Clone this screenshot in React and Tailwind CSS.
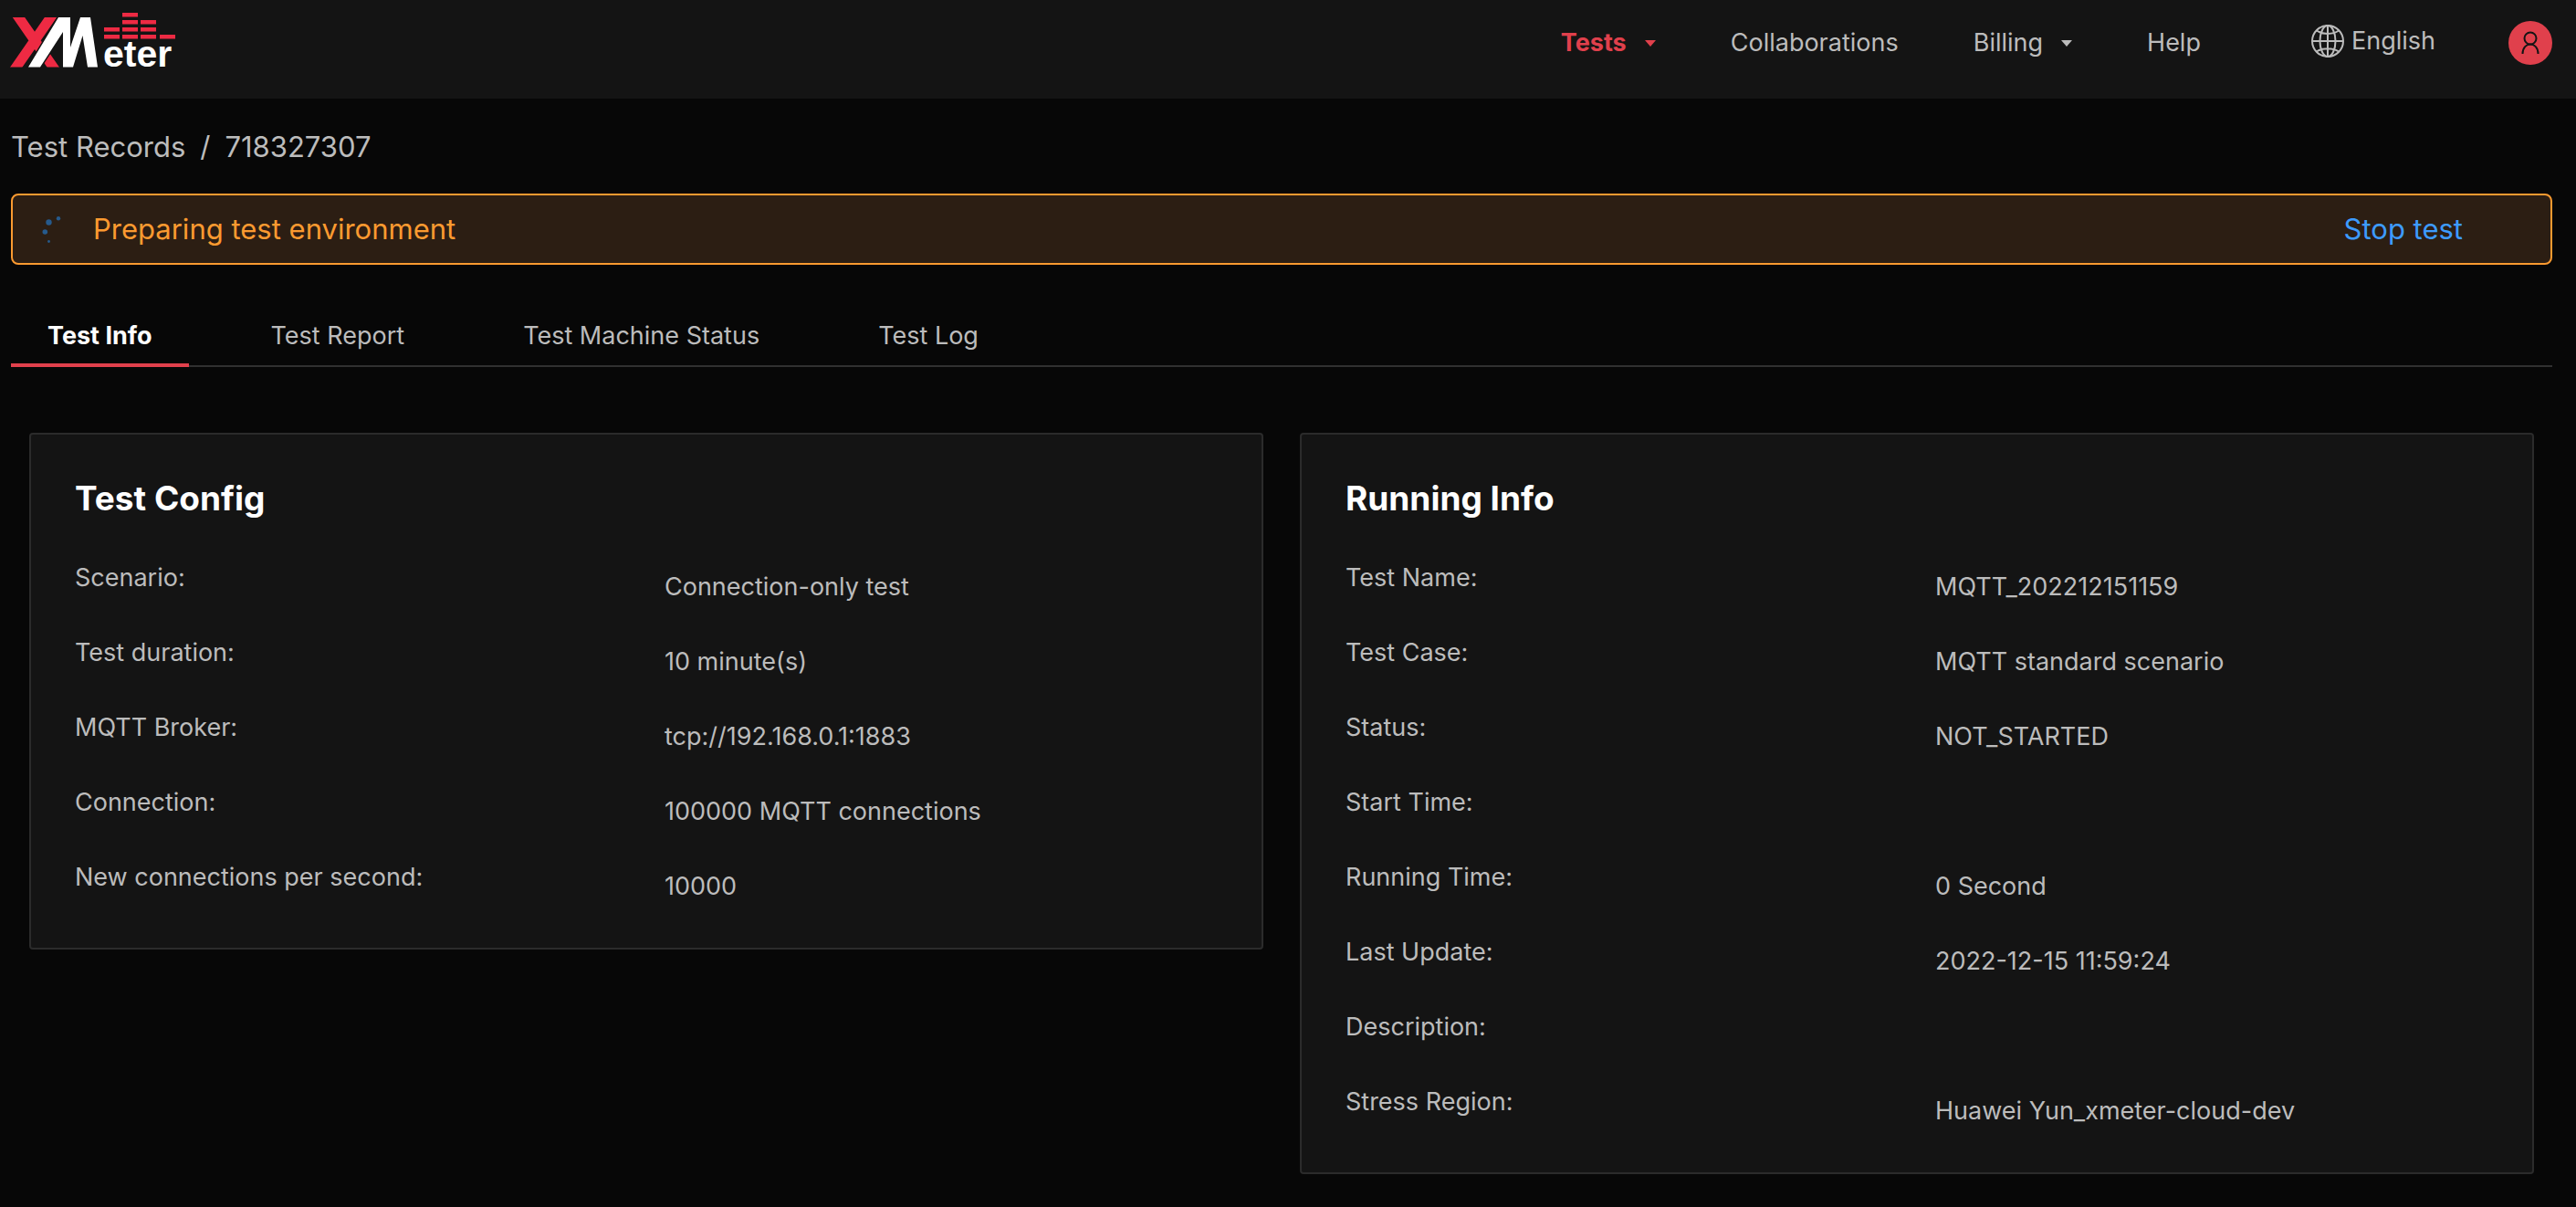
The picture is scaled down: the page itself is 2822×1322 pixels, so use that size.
import React from "react";

const BARS = [
  [134, 14],
  [134, 22],
  [154, 22],
  [114, 30],
  [134, 30],
  [154, 30],
  [114, 38],
  [134, 38],
  [154, 38],
  [175, 38],
];

function Logo() {
  return (
    <svg width="200" height="80" viewBox="10 12 200 80" role="img" aria-label="XMeter">
      <clipPath id="mark">
        <rect x="10" y="19" width="60" height="54.500" />
      </clipPath>
      <g stroke="#ee2a43" strokeWidth="11">
        <path d="M17 14 62 79M59 14 14 79" clipPath="url(#mark)" />
      </g>
      <path
        d="M31 73.500 64 19H77V52L88 19H99L107 73.500H96L90.500 39 80 73.500H69V35L44 73.500Z"
        fill="#fff"
        stroke="#141414"
        strokeWidth="3"
        paintOrder="stroke"
      />
      <g fill="#ee2a43">
        {BARS.map(([x, y]) => (
          <rect key={`${x}-${y}`} x={x} y={y} width="17" height="4.500" />
        ))}
      </g>
      <text x="113" y="73" fill="#fff" fontFamily="Liberation Sans, sans-serif" fontWeight="700" fontSize="41">
        eter
      </text>
    </svg>
  );
}

function Caret() {
  return (
    <svg width="12" height="7" viewBox="0 0 12 7" fill="currentColor" aria-hidden="true">
      <path d="M0 0h12L6 7Z" />
    </svg>
  );
}

function Globe() {
  return (
    <svg width="36" height="36" viewBox="0 0 36 36" fill="none" stroke="currentColor" strokeWidth="2" aria-hidden="true">
      <circle cx="18" cy="18" r="17" />
      <ellipse cx="18" cy="18" rx="8.500" ry="17" />
      <path d="M18 1v34M1 18h34M6 6.500c6 4.500 18 4.500 24 0M6 29.500c6-4.500 18-4.500 24 0" />
    </svg>
  );
}

function Spinner() {
  return (
    <svg width="40" height="40" viewBox="0 0 40 40" fill="#265a8c" aria-hidden="true">
      <circle cx="17.500" cy="12.500" r="3.200" />
      <circle cx="28" cy="8.300" r="2.200" />
      <circle cx="13.300" cy="23" r="2.800" />
      <circle cx="17.500" cy="33.500" r="1.400" />
    </svg>
  );
}

function Panel({ title, rows }) {
  return (
    <section className="flex-1 rounded border-2 border-[#2b2b2b] bg-[#141414] px-12 pt-[42px] pb-9">
      <h2 className="mb-[18px] text-[37px] leading-[56px] font-bold text-white">{title}</h2>
      <dl>
        {rows.map(([label, value]) => (
          <div key={label} className="grid h-[82px] grid-cols-2 items-center">
            <dt>{label}</dt>
            <dd className="pt-5 pl-5">{value}</dd>
          </div>
        ))}
      </dl>
    </section>
  );
}

const CONFIG = [
  ["Scenario:", "Connection-only test"],
  ["Test duration:", "10 minute(s)"],
  ["MQTT Broker:", "tcp://192.168.0.1:1883"],
  ["Connection:", "100000 MQTT connections"],
  ["New connections per second:", "10000"],
];

const RUNNING = [
  ["Test Name:", "MQTT_202212151159"],
  ["Test Case:", "MQTT standard scenario"],
  ["Status:", "NOT_STARTED"],
  ["Start Time:", ""],
  ["Running Time:", "0 Second"],
  ["Last Update:", "2022-12-15 11:59:24"],
  ["Description:", ""],
  ["Stress Region:", "Huawei Yun_xmeter-cloud-dev"],
];

const TAB = "-mb-0.5 h-[66px] border-b-4 px-10 pt-0.5";

export default function App() {
  return (
    <div className="min-h-screen bg-[#070707] font-['Inter',sans-serif] text-[27px] leading-[42px] text-[#bcbcbc]">
      <header className="flex h-[108px] items-start justify-between bg-[#141414] pr-[26px] pl-2.5">
        <a href="#home" className="mt-3">
          <Logo />
        </a>
        <div className="flex h-[94px] items-center">
          <nav className="flex items-center">
            <a href="#tests" className="flex items-center gap-5 px-[41px] font-bold text-[#e0404c]">
              Tests <Caret />
            </a>
            <a href="#collaborations" className="px-[41px]">Collaborations</a>
            <a href="#billing" className="flex items-center gap-5 px-[41px]">
              Billing <Caret />
            </a>
            <a href="#help" className="px-[41px]">Help</a>
          </nav>
          <button type="button" className="mb-1 flex items-center gap-2 px-20">
            <Globe />
            English
          </button>
          <button type="button" aria-label="Account" className="flex size-12 items-center justify-center rounded-full bg-[#e0404c]">
            <svg width="20" height="26" viewBox="0 0 20 26" fill="none" stroke="#141414" strokeWidth="2" aria-hidden="true">
              <circle cx="10" cy="8" r="6.500" />
              <path d="M1.500 25c0-14 17-14 17 0" />
            </svg>
          </button>
        </div>
      </header>

      <main className="px-3 pt-[29px] pr-[26px]">
        <div className="flex gap-4 pb-[27px] text-[31px] leading-[48px]">
          <a href="#records">Test Records</a>
          <span>/</span>
          <span>718327307</span>
        </div>

        <div className="flex h-[78px] items-center rounded-lg border-2 border-[#fb9a30] bg-[#2c1e13] pr-24 pl-[22px] text-[31px] leading-[48px]">
          <Spinner />
          <p className="ml-[26px] flex-1 text-[#fb9a30]">Preparing test environment</p>
          <button type="button" className="text-[#3d9bff]">Stop test</button>
        </div>

        <div role="tablist" className="mt-[46px] flex gap-[50px] border-b-2 border-[#303030]">
          <button type="button" role="tab" aria-selected="true" className={`${TAB} border-[#e0404c] font-bold text-white`}>
            Test Info
          </button>
          <button type="button" role="tab" aria-selected="false" className={`${TAB} border-transparent`}>
            Test Report
          </button>
          <button type="button" role="tab" aria-selected="false" className={`${TAB} border-transparent`}>
            Test Machine Status
          </button>
          <button type="button" role="tab" aria-selected="false" className={`${TAB} border-transparent`}>
            Test Log
          </button>
        </div>

        <div className="mt-[72px] flex items-start gap-10 px-5">
          <Panel title="Test Config" rows={CONFIG} />
          <Panel title="Running Info" rows={RUNNING} />
        </div>
      </main>
    </div>
  );
}
